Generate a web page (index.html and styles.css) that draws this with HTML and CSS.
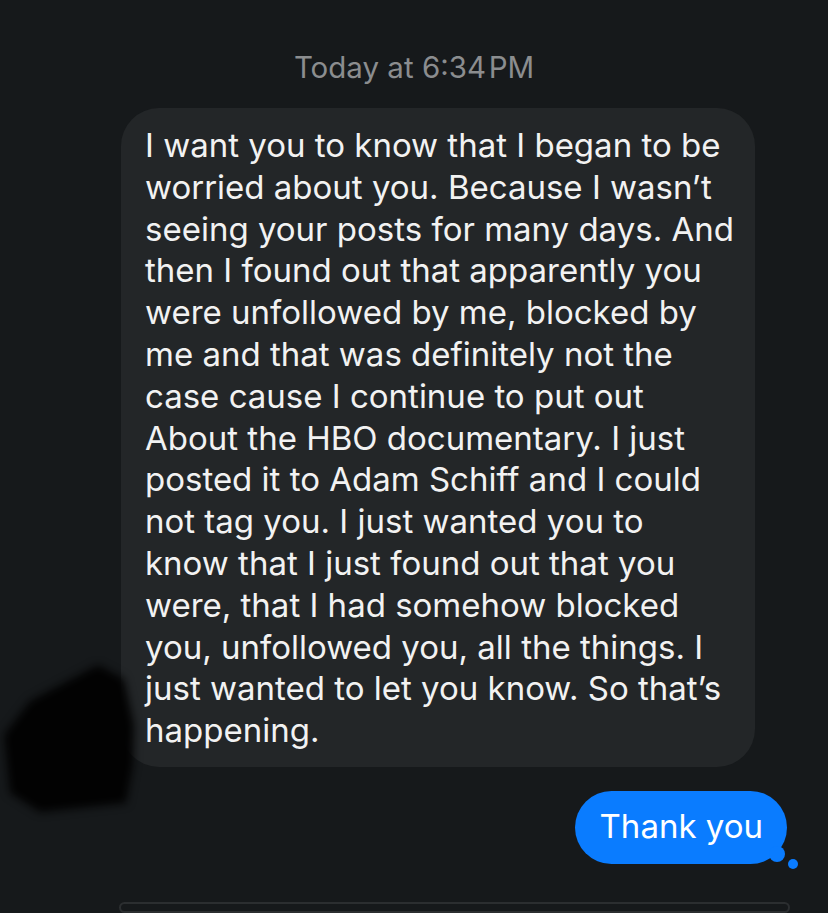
FILE: index.html
```html
<!DOCTYPE html>
<html>
<head>
<meta charset="utf-8">
<link rel="stylesheet" href="styles.css">
</head>
<body>
<div class="screen">
  <div class="timestamp">Today at 6:34&#8202;PM</div>
  <div class="row incoming">
    <div class="bubble gray">I want you to know that I began to be<br>worried about you. Because I wasn’t<br>seeing your posts for many days. And<br>then I found out that apparently you<br>were unfollowed by me, blocked by<br>me and that was definitely not the<br>case cause I continue to put out<br>About the HBO documentary. I just<br>posted it to Adam Schiff and I could<br>not tag you. I just wanted you to<br>know that I just found out that you<br>were, that I had somehow blocked<br>you, unfollowed you, all the things. I<br>just wanted to let you know. So that’s<br>happening.</div>
  </div>
  <div class="row outgoing">
    <div class="bubble blue">Thank you<span class="tail-big"></span><span class="tail-small"></span></div>
  </div>
  <div class="composer"></div>
  <div class="scribble"><div class="scribble-shape"></div></div>
</div>
</body>
</html>
```
FILE: styles.css
```css
html, body {
  margin: 0;
  padding: 0;
  background: #16191b;
}
.screen {
  position: relative;
  width: 828px;
  height: 913px;
  overflow: hidden;
  font-family: Inter, "Noto Sans", sans-serif;
  display: flex;
  flex-direction: column;
}
.timestamp {
  margin-top: 52px;
  height: 30px;
  line-height: 30px;
  text-align: center;
  color: #8b8d8f;
  font-size: 29.5px;
}
.row {
  display: flex;
}
.incoming {
  margin-top: 26px;
  padding-left: 121px;
}
.outgoing {
  margin-top: 24px;
  justify-content: flex-end;
  padding-right: 41px;
}
.bubble {
  position: relative;
  box-sizing: border-box;
}
.gray {
  width: 634px;
  background: #232628;
  color: #f2f2f2;
  border-radius: 38px;
  padding: 17px 6px 15px 24px;
  font-size: 33px;
  line-height: 41.8px;
  letter-spacing: 0;
}
.blue {
  height: 73px;
  line-height: 71px;
  background: #0a7cff;
  color: #ffffff;
  font-size: 33px;
  padding: 0 24px 0 25px;
  border-radius: 37px;
}
.tail-big {
  position: absolute;
  right: 2px;
  bottom: 2px;
  width: 16px;
  height: 16px;
  border-radius: 50%;
  background: #0a7cff;
}
.tail-small {
  position: absolute;
  right: -11px;
  bottom: -5px;
  width: 10px;
  height: 10px;
  border-radius: 50%;
  background: #0a7cff;
}
.composer {
  margin: 38px 38px 0 119px;
  height: 60px;
  border: 2px solid #2b2e30;
  border-radius: 30px;
}
.scribble {
  position: absolute;
  left: 0;
  top: 655px;
  width: 150px;
  height: 170px;
  filter: blur(4px);
}
.scribble-shape {
  width: 100%;
  height: 100%;
  background: #020202;
  clip-path: polygon(98px 10px, 124px 24px, 134px 70px, 133px 110px, 126px 148px, 40px 157px, 10px 138px, 4px 80px, 30px 46px);
}
```
